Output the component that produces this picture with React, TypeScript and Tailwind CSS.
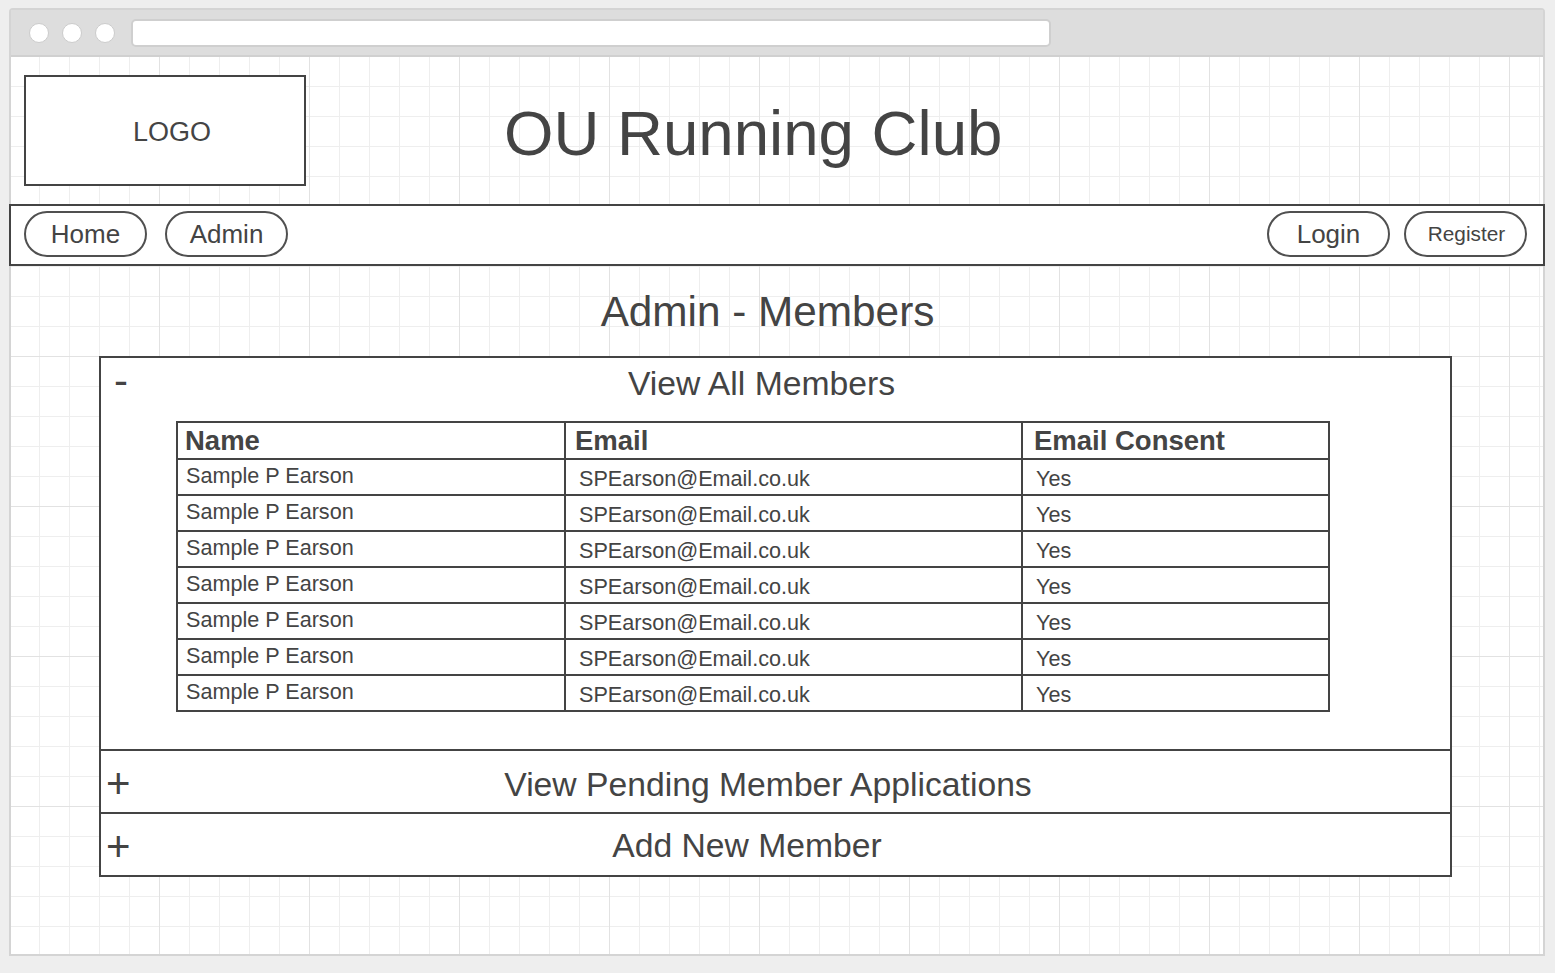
import React from "react";

const rows = Array.from({ length: 7 });

function Sign({ children, className }: { children: React.ReactNode; className: string }) {
  return (
    <span className={`[grid-area:1/1] justify-self-start self-start text-[42px] leading-none ${className}`}>
      {children}
    </span>
  );
}

export default function App() {
  return (
    <div className="w-[1555px] h-[973px] bg-[#eeeeee] pt-[8px] pl-[9px] font-['Liberation_Sans',Arial,sans-serif] text-[#444]">
      <div className="w-[1536px] h-[948px] border-2 border-[#d4d4d4] rounded-t-[4px] flex flex-col">
        {/* title bar */}
        <div className="h-[47px] shrink-0 bg-[#dddddd] border-b-2 border-[#d0d0d0] flex items-center pl-[18px] gap-[13px]">
          <div className="w-[20px] h-[20px] rounded-full bg-white border-[1.5px] border-[#cccccc]" />
          <div className="w-[20px] h-[20px] rounded-full bg-white border-[1.5px] border-[#cccccc]" />
          <div className="w-[20px] h-[20px] rounded-full bg-white border-[1.5px] border-[#cccccc]" />
          <div className="ml-[3px] w-[920px] h-[28px] bg-white border-2 border-[#cfcfcf] rounded-[5px]" />
        </div>

        {/* content */}
        <div className="flex-1 flex flex-col bg-white bg-[linear-gradient(to_right,#e2e2e2_1px,transparent_1px),linear-gradient(to_bottom,#e2e2e2_1px,transparent_1px),linear-gradient(to_right,#eeeeee_1px,transparent_1px),linear-gradient(to_bottom,#eeeeee_1px,transparent_1px)] bg-[size:150px_150px,150px_150px,30px_30px,30px_30px] bg-[position:148px_149px,148px_149px,28px_29px,28px_29px]">
          {/* header */}
          <div className="h-[147px] shrink-0 flex items-start">
            <div className="ml-[13px] mt-[18px] w-[282px] h-[111px] border-2 border-[#444] bg-white flex items-center justify-center pl-[14px] pt-[3px] text-[27px] leading-none">
              LOGO
            </div>
            <div className="ml-[198px] mt-[44px] text-[63.6px] leading-none">OU Running Club</div>
          </div>

          {/* nav */}
          <div className="-mx-[2px] w-[1536px] h-[62px] shrink-0 border-2 border-[#444] bg-white flex items-start pt-[5px] pl-[13px] pr-[16px]">
            <div className="w-[123px] h-[46px] rounded-full border-2 border-[#505050] flex items-center justify-center text-[26px] leading-none">
              Home
            </div>
            <div className="ml-[18px] w-[123px] h-[46px] rounded-full border-2 border-[#505050] flex items-center justify-center text-[26px] leading-none">
              Admin
            </div>
            <div className="ml-auto w-[123px] h-[46px] rounded-full border-2 border-[#505050] flex items-center justify-center text-[26px] leading-none">
              Login
            </div>
            <div className="ml-[14px] w-[123px] h-[46px] rounded-full border-2 border-[#505050] flex items-center justify-center pl-[2px] text-[20.8px] leading-none">
              Register
            </div>
          </div>

          {/* page title */}
          <div className="mt-[25px] text-center pr-[19px] text-[42.3px] leading-none">Admin - Members</div>

          {/* accordion */}
          <div className="mt-[23px] ml-[88px] w-[1353px] border-2 border-[#444] bg-white flex flex-col">
            {/* section 1 */}
            <div className="h-[393px] border-b-2 border-[#444] flex flex-col">
              <div className="grid h-[42px]">
                <Sign className="ml-[13px] mt-[2px]">-</Sign>
                <div className="[grid-area:1/1] pt-[9px] pr-[28px] text-center text-[33.7px] leading-none">View All Members</div>
              </div>
              <div className="mt-[21px] ml-[75px] w-[1154px] border-2 border-[#444]">
                <div className="grid grid-cols-[386px_457px_307px] h-[35px] font-bold text-[27.5px] leading-none">
                  <div className="pl-[7px] pt-[4px]">Name</div>
                  <div className="border-l-2 border-[#444] pl-[9px] pt-[4px]">Email</div>
                  <div className="border-l-2 border-[#444] pl-[11px] pt-[4px]">Email Consent</div>
                </div>
                {rows.map((_, i) => (
                  <div key={i} className="grid grid-cols-[386px_457px_307px] h-[36px] border-t-2 border-[#444] text-[21.6px] leading-none">
                    <div className="pl-[8px] pt-[5px]">Sample P Earson</div>
                    <div className="border-l-2 border-[#444] pl-[13px] pt-[8px]">SPEarson@Email.co.uk</div>
                    <div className="border-l-2 border-[#444] pl-[13px] pt-[8px]">Yes</div>
                  </div>
                ))}
              </div>
            </div>

            {/* section 2 */}
            <div className="h-[63px] border-b-2 border-[#444] grid">
              <Sign className="ml-[5px] mt-[12px]">+</Sign>
              <div className="[grid-area:1/1] pt-[17px] pr-[15px] text-center text-[33.7px] leading-none">
                View Pending Member Applications
              </div>
            </div>

            {/* section 3 */}
            <div className="h-[61px] grid">
              <Sign className="ml-[5px] mt-[12px]">+</Sign>
              <div className="[grid-area:1/1] pt-[15px] pr-[57px] text-center text-[33.7px] leading-none">Add New Member</div>
            </div>
          </div>
        </div>
      </div>
    </div>
  );
}
